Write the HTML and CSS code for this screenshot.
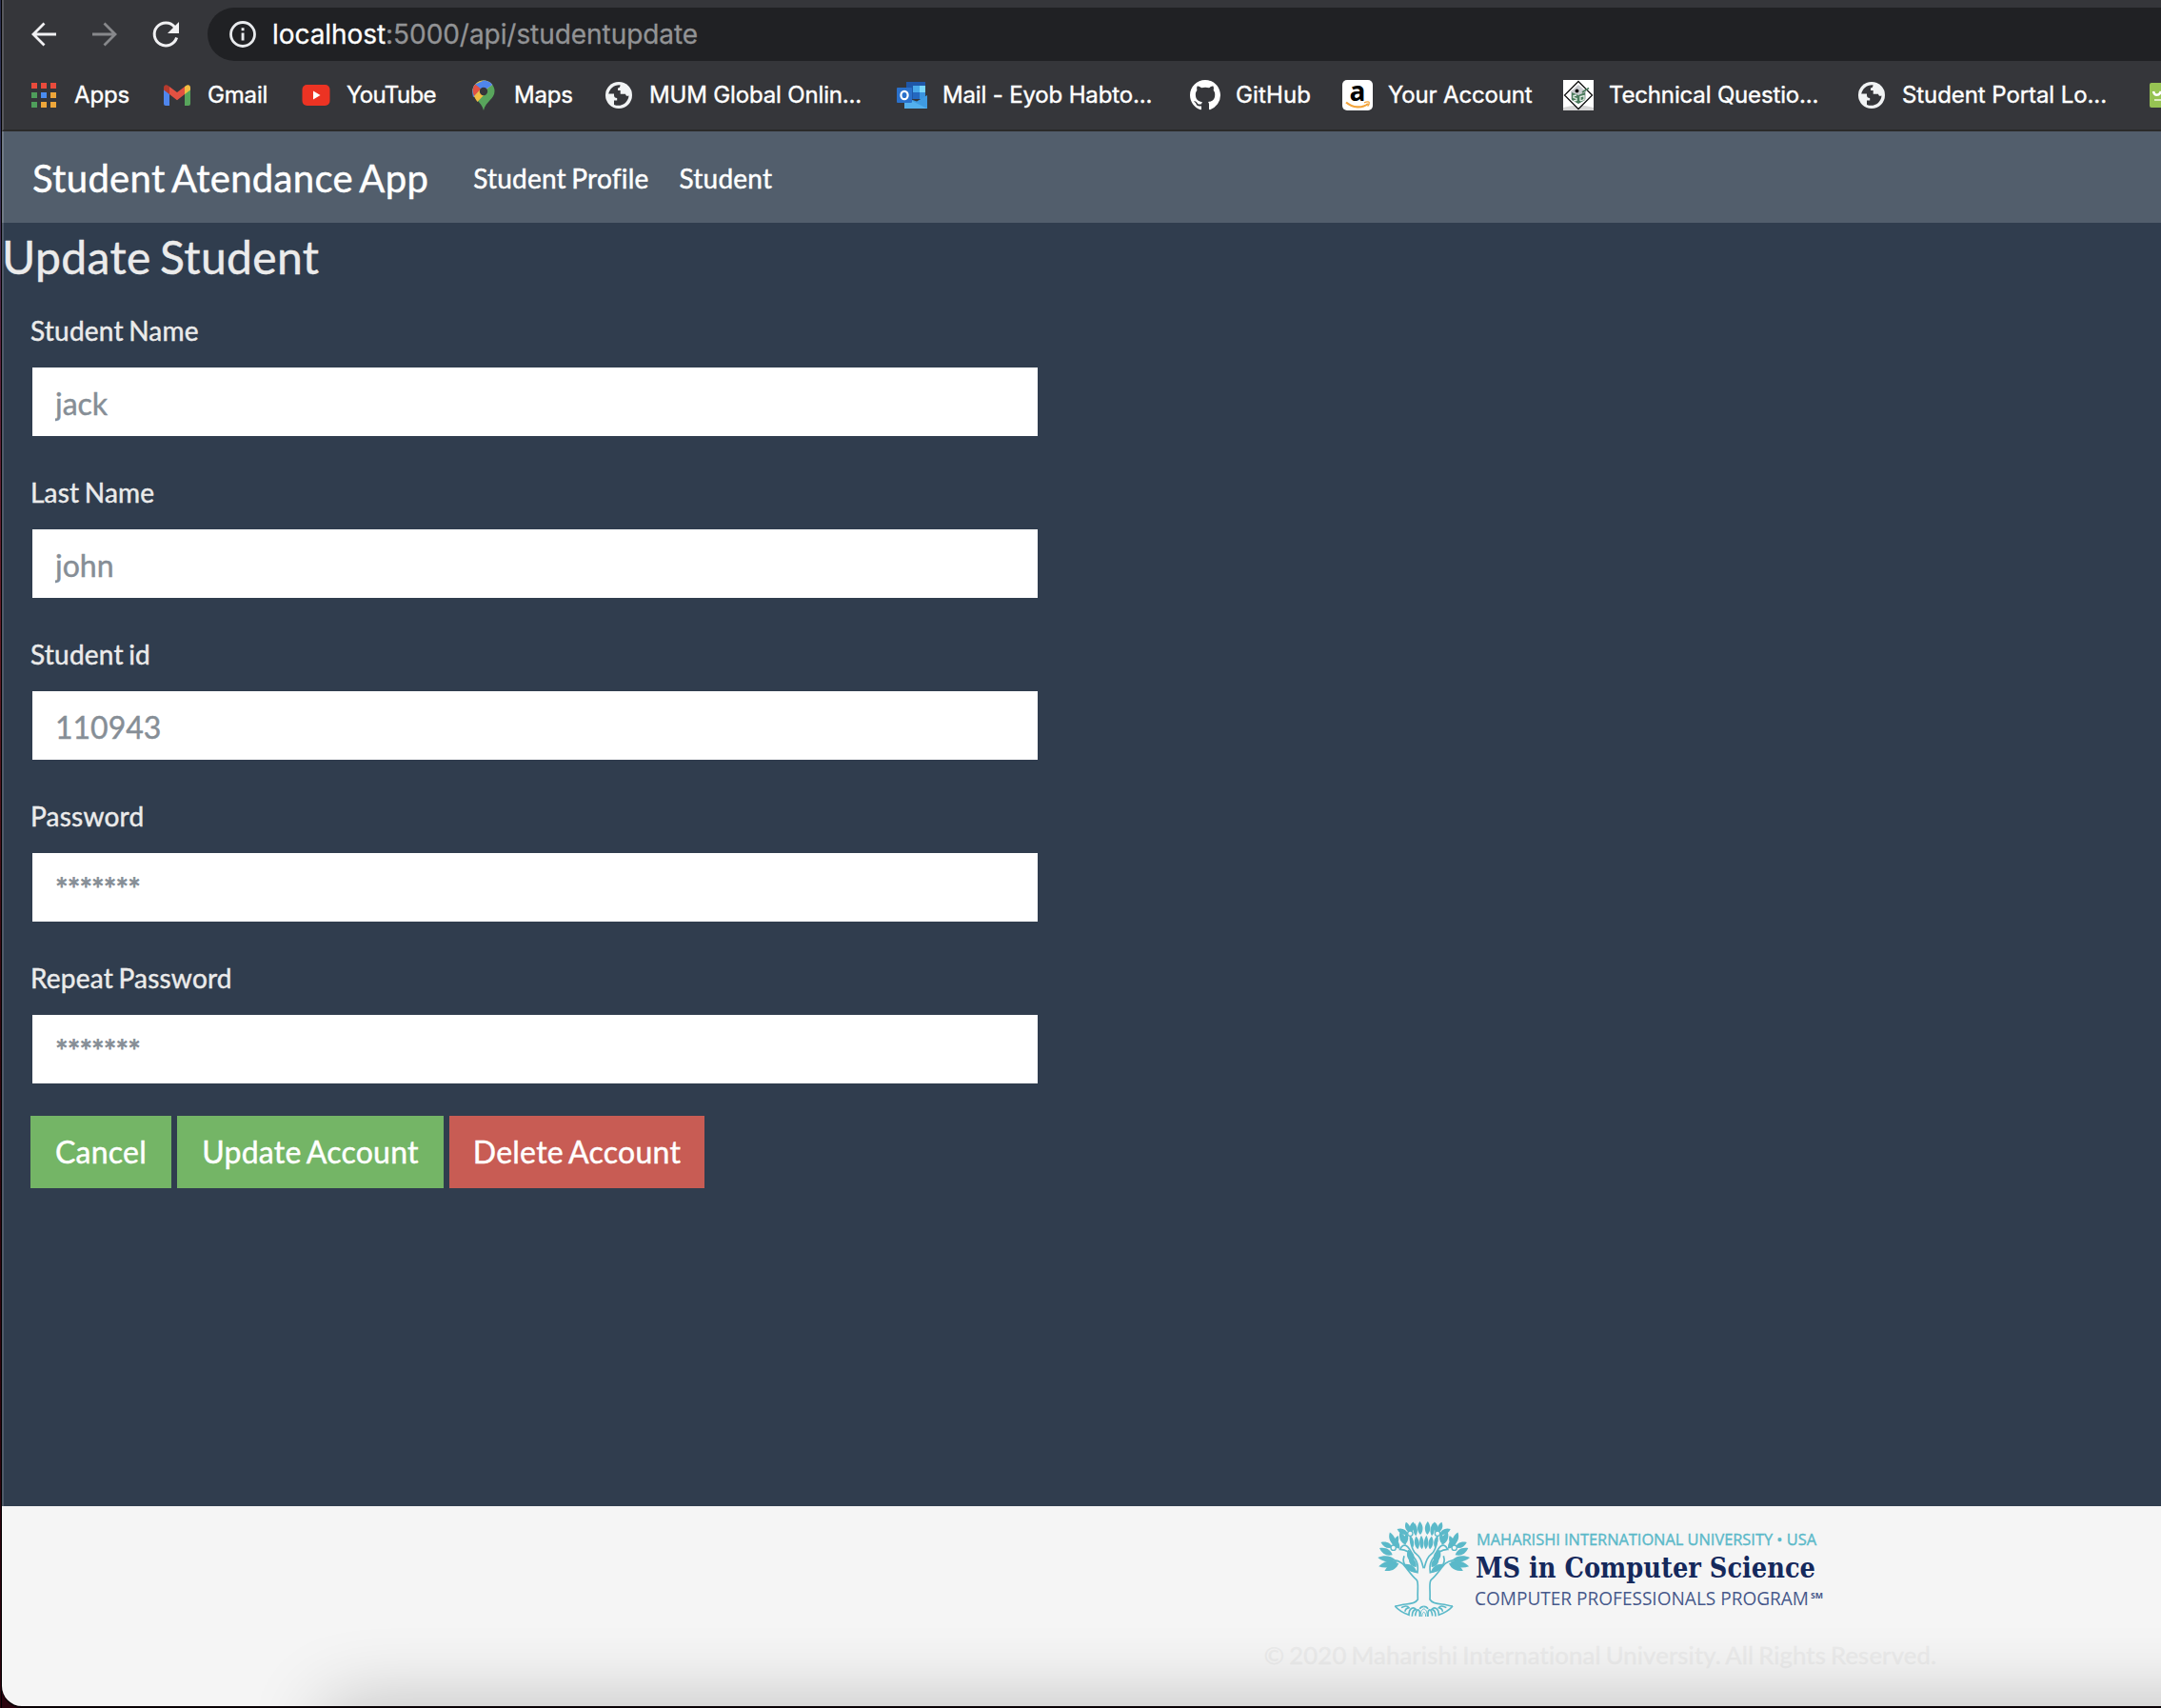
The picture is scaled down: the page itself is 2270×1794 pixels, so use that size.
FILE: index.html
```html
<!DOCTYPE html>
<html lang="en">
<head>
<meta charset="utf-8">
<title>Student Atendance App</title>
<link rel="stylesheet" href="styles.css">
</head>
<body>
<div class="window">
  <header class="browser">
    <div class="toolbar">
      <svg class="nav-icon" viewBox="0 0 28 28"><path d="M27 14H3M14.500 2.500L3 14l11.500 11.500" fill="none" stroke="#f1f1f3" stroke-width="2.8"/></svg>
      <svg class="nav-icon" viewBox="0 0 28 28"><path d="M1 14h24M13.500 2.500L25 14 13.500 25.500" fill="none" stroke="#87888b" stroke-width="2.8"/></svg>
      <svg class="nav-icon" viewBox="0 0 28 28"><path d="M23.6 6.5A12 12 0 1 0 25.600 17.500" fill="none" stroke="#f1f1f3" stroke-width="3"/><path d="M28 1v12H16z" fill="#f1f1f3"/></svg>
      <div class="address">
        <svg class="info-icon" viewBox="0 0 28 28"><circle cx="14" cy="14" r="12.500" fill="none" stroke="#e8eaed" stroke-width="2.800"/><path d="M12.600 12.500h2.900v8h-2.900zM12.600 7.300h2.900v2.900h-2.900z" fill="#e8eaed"/></svg>
        <span class="url"><span class="host">localhost</span>:5000/api/studentupdate</span>
      </div>
    </div>
    <nav class="bookmarks">
      <a class="bookmark"><svg viewBox="0 0 32 32"><path d="M3 3h6v6H3zM13 3h6v6h-6zM23 3h6v6h-6z" fill="#e94b3c"/><path d="M3 13h6v6H3zM3 23h6v6H3z" fill="#4f9f5b"/><path d="M13 13h6v6h-6z" fill="#4a8cf0"/><path d="M23 13h6v6h-6zM13 23h6v6h-6zM23 23h6v6h-6z" fill="#eda63a"/></svg><span>Apps</span></a>
      <a class="bookmark"><svg viewBox="0 0 32 32"><path d="M2 8l6 4.500V27H4a2 2 0 0 1-2-2z" fill="#4f86ec"/><path d="M30 8l-6 4.500V27h4a2 2 0 0 0 2-2z" fill="#58a55c"/><path d="M8 7l8 6 8-6v8l-8 6.300L8 15z" fill="#e25142"/><path d="M2 8c0-3 3-4 6-1v8l-6-4.600z" fill="#b53a2d"/><path d="M30 8c0-3-3-4-6-1v8l6-4.600z" fill="#f2bd42"/></svg><span>Gmail</span></a>
      <a class="bookmark youtube"><svg viewBox="0 0 32 32"><rect x="1.500" y="5" width="29" height="22" rx="5" fill="#ec3323"/><path d="M13 11.500l7.500 4.500-7.500 4.500z" fill="#fff"/></svg><span>YouTube</span></a>
      <a class="bookmark"><svg viewBox="0 0 32 32"><path d="M4.500 12a11.500 11.500 0 0 1 23 0c0 8-9 10-11.500 20C13.500 22 4.500 20 4.500 12z" fill="#58a55c"/><path d="M16 .5c3.800 0 7.200 1.700 9.300 4.500L7.500 19C3 13.500 4 7.500 7.300 4.500 9.500 2 12.500.5 16 .5z" fill="#f2bd42"/><path d="M16 .5c3.800 0 7.200 1.700 9.300 4.500L13 14 5 18C3.500 12 4.500 7.500 7.300 4.500z" fill="#4f86ec"/><path d="M7.300 4.500l6 5-7.300 7.500C4 12 4.500 7.500 7.300 4.500z" fill="#e25142"/><path d="M6 17l6.500-7 5 4.500-8 8.500C8 21 6.800 19 6 17z" fill="#f2bd42"/><circle cx="16" cy="12" r="4.200" fill="#35363a"/></svg><span>Maps</span></a>
      <a class="bookmark"><svg viewBox="0 0 32 32"><circle cx="16" cy="16" r="14" fill="#f1f3f4"/><path d="M17.500 5.200C11 4.800 6.500 9 5.200 14.600H11v1.600c0 1.500 1 2.700 3.200 2.700v2.700H11V26c7.500 3 15-2.200 15.500-9.500-2 1-3.400-.2-3.400-1.800h-5.400V11h-2.700V8.500c1.600 0 2.500-1 2.500-3.300z" fill="#35363a"/></svg><span>MUM Global Onlin...</span></a>
      <a class="bookmark"><svg viewBox="0 0 32 32"><path d="M10 2h20v18H10z" fill="#1f57a8"/><path d="M17 6h7v7h-7z" fill="#49a9ea"/><path d="M24 6h6v7h-6z" fill="#79d7fb"/><path d="M17 13h7v7h-7z" fill="#2468c0"/><path d="M24 13h6v7h-6z" fill="#3a94e0"/><path d="M8 30V18l13 4.500L32 16v14z" fill="#3f9be2"/><path d="M8 18v12h24z" fill="#53b0ed"/><rect y="8" width="16" height="16" rx="1" fill="#2a70ca"/><ellipse cx="8" cy="16" rx="3.600" ry="4.200" fill="none" stroke="#fff" stroke-width="2.200"/></svg><span>Mail - Eyob Habto...</span></a>
      <a class="bookmark github"><svg viewBox="0 0 16 16"><path fill="#fff" d="M8 0C3.580 0 0 3.580 0 8c0 3.540 2.290 6.530 5.470 7.590.4.070.55-.17.55-.38 0-.19-.01-.82-.01-1.490-2.010.37-2.530-.49-2.690-.94-.09-.23-.48-.94-.82-1.130-.28-.15-.68-.52-.01-.53.63-.01 1.080.58 1.230.82.72 1.210 1.870.87 2.330.66.070-.52.28-.87.51-1.070-1.780-.2-3.640-.89-3.640-3.950 0-.87.31-1.590.82-2.150-.08-.2-.36-1.020.08-2.120 0 0 .67-.21 2.200.82.64-.18 1.320-.27 2-.27s1.360.09 2 .27c1.530-1.040 2.200-.82 2.200-.82.44 1.100.16 1.920.08 2.120.51.56.82 1.270.82 2.150 0 3.070-1.870 3.750-3.650 3.950.29.25.54.73.54 1.480 0 1.070-.01 1.930-.01 2.200 0 .21.15.46.55.38A8.010 8.010 0 0 0 16 8c0-4.420-3.580-8-8-8z"/></svg><span>GitHub</span></a>
      <a class="bookmark"><svg viewBox="0 0 32 32"><rect width="32" height="32" rx="5" fill="#fff"/><text x="16" y="22" text-anchor="middle" class="amazon-a">a</text><path d="M4 23.500c7 6 17 6.500 23 1.500" fill="none" stroke="#f3a43b" stroke-width="2.200"/><path d="M23 23.800c3-1.400 5-1 5.200-.4.200 1-.4 3-1.600 4.200" fill="none" stroke="#f3a43b" stroke-width="1.300"/></svg><span>Your Account</span></a>
      <a class="bookmark"><svg viewBox="0 0 32 32"><path d="M0 0h32v32H0z" fill="#fff"/><path d="M0 29q16-5 32 0v3H0z" fill="#d6d6d6"/><path d="M16 1.500L30.500 16 16 30.500 1.500 16z" fill="#fff" stroke="#111" stroke-width="1.300"/><path d="M16 5l8 7v8l-8 5-8-5v-8z" fill="#c9cbcf"/><path d="M9 13l7 3 7-3v8l-7 4-7-4z" fill="#4a7a5c"/><path d="M14 16l-3 .5v2l3 1v2l-3 .5M18 22v-4.500l4-1v4l-4 1.500" stroke="#e8f1ea" stroke-width="1.300" fill="none"/><path d="M20 13l7-4.500" stroke="#4a7a5c" stroke-width="1.600"/><circle cx="14.500" cy="11.500" r="2" fill="#111"/></svg><span>Technical Questio...</span></a>
      <a class="bookmark portal"><svg viewBox="0 0 32 32"><circle cx="16" cy="16" r="14" fill="#f1f3f4"/><path d="M17.500 5.200C11 4.800 6.500 9 5.200 14.600H11v1.600c0 1.500 1 2.700 3.200 2.700v2.700H11V26c7.500 3 15-2.200 15.500-9.500-2 1-3.400-.2-3.400-1.800h-5.400V11h-2.700V8.500c1.600 0 2.500-1 2.500-3.300z" fill="#35363a"/></svg><span>Student Portal Lo...</span></a>
      <a class="bookmark"><svg viewBox="0 0 32 32"><rect x="2" y="3" width="30" height="26" rx="2" fill="#96c353"/><path d="M6 12c1 5 6 5 8 0" fill="none" stroke="#fff" stroke-width="2.500"/><path d="M7 21h9" stroke="#dcebc2" stroke-width="2"/></svg></a>
    </nav>
  </header>
  <nav class="navbar">
    <a class="brand">Student Atendance App</a>
    <a class="nav-link">Student Profile</a>
    <a class="nav-link">Student</a>
  </nav>
  <main class="content">
    <h1>Update Student</h1>
    <form>
      <div class="group"><label for="first">Student Name</label><input id="first" type="text" placeholder="jack"></div>
      <div class="group"><label for="last">Last Name</label><input id="last" type="text" placeholder="john"></div>
      <div class="group"><label for="sid">Student id</label><input id="sid" type="text" placeholder="110943"></div>
      <div class="group"><label for="pw">Password</label><input id="pw" type="password" placeholder="*******"></div>
      <div class="group"><label for="pw2">Repeat Password</label><input id="pw2" type="password" placeholder="*******"></div>
      <div class="actions">
        <button type="button" class="btn cancel">Cancel</button>
        <button type="button" class="btn update">Update Account</button>
        <button type="button" class="btn delete">Delete Account</button>
      </div>
    </form>
  </main>
  <footer class="footer">
    <svg class="logo" viewBox="0 0 480 112">
      <defs>
        <path id="leaf" d="M0 0C-11-12-11-28 0-42 11-28 11-12 0 0z"/>
        <g id="half">
          <g fill="#5bb9c9">
            <use href="#leaf" transform="translate(156 66) rotate(-2)"/>
            <use href="#leaf" transform="translate(161 112) rotate(-3) scale(.8 1.050)"/>
            <use href="#leaf" transform="translate(142 70) rotate(-6) scale(.8 1)"/>
            <use href="#leaf" transform="translate(126 58) rotate(14) scale(.9 .8)"/>
            <use href="#leaf" transform="translate(121 58) rotate(-18) scale(.9 .8)"/>
            <use href="#leaf" transform="translate(117 64) rotate(-65) scale(1 .9)"/>
            <use href="#leaf" transform="translate(148 112) rotate(-8) scale(.9 1)"/>
            <use href="#leaf" transform="translate(133 106) rotate(-12) scale(.7 .9)"/>
            <use href="#leaf" transform="translate(110 98) rotate(-25) scale(1.100 1.050)"/>
            <use href="#leaf" transform="translate(112 92) rotate(0) scale(.7 .8)"/>
            <use href="#leaf" transform="translate(91 110) rotate(-38) scale(1.200 1.150)"/>
            <use href="#leaf" transform="translate(74 98) rotate(-20) scale(1 1)"/>
            <use href="#leaf" transform="translate(72 104) rotate(22) scale(.9 .9)"/>
            <use href="#leaf" transform="translate(68 106) rotate(-66) scale(1 .95)"/>
            <use href="#leaf" transform="translate(68 130) rotate(-62) scale(1.150 1.100)"/>
            <use href="#leaf" transform="translate(78 146) rotate(-82) scale(1.100 1.350)"/>
            <use href="#leaf" transform="translate(84 152) rotate(-103) scale(1.200 1.450)"/>
            <use href="#leaf" transform="translate(88 156) rotate(-118) scale(1.150 1.200)"/>
            <use href="#leaf" transform="translate(133 152) rotate(-22) scale(1.300 1)"/>
            <use href="#leaf" transform="translate(143 168) rotate(-38) scale(1.100 .9)"/>
            <use href="#leaf" transform="translate(145 184) rotate(-56) scale(1.100 1.100)"/>
          </g>
          <g fill="none" stroke="#5bb9c9" stroke-width="5">
            <path d="M72 146c34 2 40 34 72 62 8 8 2 30 4 62-6 10-22 14-38 15-12 1-22 5-34 6"/>
            <path d="M105 133c-10 30 14 46 42 52 4-30-4-44-30-66"/>
            <path d="M166 172C160 150 158 138 138 122 128 108 124 90 124 66M132 130C118 100 104 88 92 112 104 112 112 116 118 120"/>
            <path d="M76 291c12 14 28 22 44 28 0-22 14-26 22-18-10 2-12 10-12 22M96 296c10-6 20-6 24 0-8 2-12 6-12 12M140 322c2-20 12-26 14-10v12M154 300c4-8 10-8 13-8" stroke-width="5"/>
            <path d="M156 324c0-20 8-24 11-24M161 324c0-10 4-14 6-14" stroke-width="3"/>
          </g>
          <g fill="#f5f5f5" stroke="#5bb9c9" stroke-width="4"><circle cx="124" cy="62" r="8"/><circle cx="71" cy="107" r="8"/></g>
        </g>
      </defs>
      <g transform="translate(-1 0) scale(.3333)"><use href="#half"/><use href="#half" transform="matrix(-1 0 0 1 334 0)"/></g>
      <text x="110" y="33" textLength="357" lengthAdjust="spacingAndGlyphs" class="logo-top">MAHARISHI INTERNATIONAL UNIVERSITY • USA</text>
      <text x="109" y="67" textLength="357" lengthAdjust="spacingAndGlyphs" class="logo-mid">MS in Computer Science</text>
      <text x="108" y="96" textLength="351" lengthAdjust="spacingAndGlyphs" class="logo-low">COMPUTER PROFESSIONALS PROGRAM</text>
      <text x="461" y="89" textLength="13" lengthAdjust="spacingAndGlyphs" class="logo-sm">SM</text>
    </svg>
    <p>© 2020 Maharishi International University. All Rights Reserved.</p>
  </footer>
</div>
</body>
</html>
```
FILE: styles.css
```css
* { box-sizing: border-box; }
html, body { margin: 0; height: 100%; overflow: hidden; }
body {
  width: 2270px;
  height: 1794px;
  padding: 0 0 2px 2px;
  background: linear-gradient(90deg, transparent 1px, #000 1px, #000 2px, transparent 2px),
              linear-gradient(#2c3050, #34365e 10%, #5c2340 20%, #641c28 36%, #32060f 60%, #2c040e);
  font-family: Lato, sans-serif;
}
svg { overflow: visible; }
.window {
  position: relative;
  display: flex;
  flex-direction: column;
  width: 2268px;
  height: 1792px;
  overflow: hidden;
  border-bottom-left-radius: 21px;
  box-shadow: 0 2px 0 #090205;
}
.window::after {
  content: "";
  position: absolute;
  left: 342px;
  right: -200px;
  top: 1792px;
  height: 200px;
  box-shadow: 0 0 82px rgba(0, 0, 0, .24);
}

.browser {
  height: 138px;
  border-left: 2px solid #56575b;
  border-bottom: 2px solid #2a2a2a;
  background: #35363a;
  color: #fff;
  font-family: Inter, sans-serif;
}
.toolbar {
  display: flex;
  align-items: center;
  height: 64px;
  padding: 8px 0 0 28px;
}
.nav-icon { width: 28px; height: 28px; margin-right: 36px; flex: none; }
.address {
  display: flex;
  align-items: center;
  flex: 1;
  height: 56px;
  margin-left: -6px;
  padding-left: 23px;
  border-radius: 28px 0 0 28px;
  background: #202124;
}
.info-icon { width: 28px; height: 28px; margin-right: 17px; }
.url { font-size: 28px; letter-spacing: -.06px; color: #929395; -webkit-text-stroke: .3px; }
.host { color: #fff; }
.bookmarks {
  display: grid;
  grid-template-columns: 140px 146px 176px 142px 308px 308px 160px 232px 308px 306px 32px;
  height: 72px;
  padding-left: 26px;
}
.bookmark {
  display: flex;
  align-items: center;
  gap: 16px;
  font-size: 24px;
  letter-spacing: -.16px;
  white-space: nowrap;
  -webkit-text-stroke: .4px;
}
.bookmark span { padding-bottom: 2px; }
.youtube { letter-spacing: -.65px; }
.github { letter-spacing: .15px; }
.portal { letter-spacing: -.08px; }
.bookmark svg { width: 32px; height: 32px; flex: none; }
.amazon-a { font: bold 28px "Open Sans", sans-serif; letter-spacing: 0; }

.navbar, .content { -webkit-text-stroke: .45px; }
.brand, .nav-link, .group label, h1, .btn, .footer p { letter-spacing: .008em; word-spacing: -.07em; }
.navbar {
  display: flex;
  align-items: flex-start;
  height: 96px;
  padding: 24px 30px;
  border-left: 2px solid #707a85;
  background: #525e6c;
  color: #fff;
}
.brand { font-size: 40px; line-height: 50px; margin-right: 47px; }
.nav-link { font-size: 28px; line-height: 50px; margin-right: 32px; }

.content {
  flex: 1;
  border-left: 2px solid #4f5a68;
  background: #303d4e;
  color: #ebebeb;
}
h1 { margin: 0 0 0 -2px; padding-top: 7px; font-size: 48px; line-height: 58px; font-weight: 400; }
form { padding: 27px 0 0 28px; }
.group { height: 170px; }
.group label { display: block; height: 58px; font-size: 28px; line-height: 42px; }
.group input {
  display: block;
  width: 1060px;
  height: 76px;
  padding: 2px 24px 0;
  border: 2px solid transparent;
  border-radius: 0;
  background: #fff;
  background-clip: padding-box;
  font: 32px Lato, sans-serif;
}
.group input[type="password"] { letter-spacing: -.9px; -webkit-text-stroke: .8px; }
.group input::placeholder { color: #868e96; }
.actions { display: flex; gap: 6px; margin-top: -4px; }
.btn {
  height: 76px;
  padding: 0 0 2px;
  border: 0;
  color: #fff;
  font: 32px Lato, sans-serif;
  background: #74b566;
}
.cancel { width: 148px; }
.update { width: 280px; }
.delete { width: 268px; background: #c85c54; }

.footer {
  display: flex;
  flex-direction: column;
  align-items: center;
  height: 210px;
  padding-left: 1090px;
  background: #f5f5f5;
}
.logo { width: 480px; height: 112px; margin-top: 8px; }
.logo-top { font: 17px "Open Sans", sans-serif; fill: #5bb9c9; stroke: #5bb9c9; stroke-width: .4px; }
.logo-mid { font: bold 30px "DejaVu Serif", serif; fill: #15295c; }
.logo-low { font: 20px "Open Sans", sans-serif; fill: #47598b; }
.logo-sm { font: bold 8px "Open Sans", sans-serif; fill: #47598b; }
.footer p { margin: 16px 0 0; font-size: 25.6px; line-height: 40px; color: #ebebeb; white-space: nowrap; -webkit-text-stroke: .3px; }
```
